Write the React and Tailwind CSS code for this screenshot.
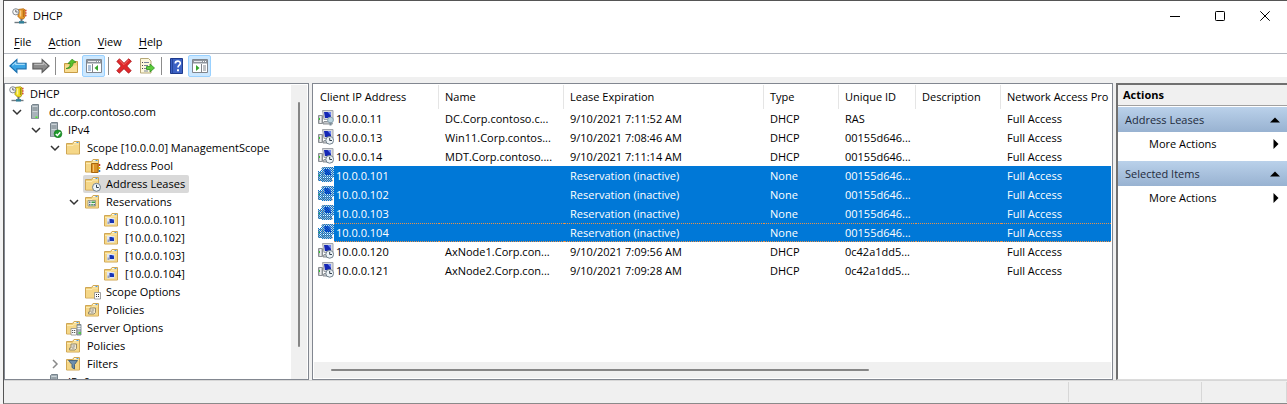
import React from "react";

/* ---------- icons ---------- */
const Svg = ({ children, size = "size-4" }) => (
  <svg viewBox="0 0 16 16" className={`${size} shrink-0`} aria-hidden="true">
    {children}
  </svg>
);

const DhcpMark = ({ fill, shade, shine }) => (
  <Svg>
    <path d="M6 1.500L11.500.8l1.500 1v6.700l-1.500 2.500H8.500L6 8.500z" fill={fill} stroke={shade} strokeWidth=".9" />
    <path d="M8.500 2.500v6" stroke={shine} strokeWidth="1.500" />
    <path d="M11.500 2v7" stroke={shade} strokeWidth="1.200" />
    <path d="M13.200 2.500h1.300M13.200 5h1.300M13.200 7.500h1.300" stroke="#d8361e" strokeWidth="1.500" />
    <path d="M9.500 11v2.500" stroke="#6b6f73" strokeWidth="2" />
    <path d="M2.500 14.500h12" stroke="#70797f" strokeWidth="1.400" />
    <path d="M7 14.300h5" stroke="#2f7f98" strokeWidth="2.400" />
    <circle cx="3.800" cy="3.800" r="3.100" fill="#f4f6f8" stroke="#858b91" />
    <path d="M3.800 1.800v2.200h1.900" fill="none" stroke="#555" strokeWidth=".9" />
  </Svg>
);

const Server = ({ ok }) => (
  <Svg>
    <path d="M3.500 1.500l1-1h6v14h-7z" fill="#9aa5ad" stroke="#77838c" />
    <path d="M4 1.500h6v13H4z" fill="#a9b4bb" />
    <path d="M4.500 3h5M4.500 5h5M4.500 7h5" stroke="#eef3f5" />
    <path d="M4.500 4h5M4.500 6h5" stroke="#4d5a64" strokeWidth=".8" />
    {ok ? (
      <>
        <circle cx="11" cy="11.800" r="3.900" fill="#1f9a2b" stroke="#11701b" strokeWidth=".6" />
        <path d="M8.800 11.900l1.600 1.600 2.900-3.200" fill="none" stroke="#fff" strokeWidth="1.400" />
      </>
    ) : (
      <path d="M7.500 12.500h2v1.500h-2z" fill="#4cf02a" />
    )}
  </Svg>
);

const FolderBase = () => (
  <>
    <path d="M.5 3.500h6l1.500-2h5.500v12.500H.5z" fill="#f0cf78" stroke="#cfa654" />
    <path d="M8 2.500h5" stroke="#fff8dc" />
    <path d="M10.500 2.500h2" stroke="#4f9be0" />
    <path d="M1 5.500l6.500-.5 1-1H13v9.500H1z" fill="#f5d788" />
    <path d="M1 5.500h6l1-1.500h5" fill="none" stroke="#fdefbf" strokeWidth=".8" />
  </>
);

const overlays = {
  pool: (
    <>
      <path d="M6.500 5.500H13v9H6.500z" fill="#dc9326" stroke="#a8660f" />
      <path d="M8.500 6.500v7.500" stroke="#f4c36d" />
      <path d="M14.500 6v2" stroke="#d33a22" strokeWidth="1.500" />
      <path d="M14.500 9v2" stroke="#e6b800" strokeWidth="1.500" />
      <path d="M14.500 12v2" stroke="#2b79c9" strokeWidth="1.500" />
    </>
  ),
  clock: (
    <>
      <circle cx="11.500" cy="11.300" r="4" fill="#eef4f8" stroke="#71808c" />
      <path d="M11.500 8.800v2.700h2.300" fill="none" stroke="#33414d" />
    </>
  ),
  grid: (
    <>
      <path d="M3 6.500h7.500V12H3z" fill="#eef2ea" stroke="#8d907c" strokeWidth=".8" />
      <path d="M4 7.500h1.500V9H4zM4 10h1.500v1.500H4zM8.500 10H10v1.500H8.500z" fill="#5b6f91" />
      <path d="M6.500 7.500H10V9H6.500zM6.300 10h1.500v1.500H6.300z" fill="#3a9b45" />
    </>
  ),
  pc: (
    <>
      <path d="M3 6h7.500v6.500H3z" fill="#dfe6f3" />
      <path d="M5.500 7H10v4H5.500z" fill="#1733b4" />
      <path d="M7.500 7H10v1.500z" fill="#6f8ff0" />
      <path d="M3.500 9.500h2V12h-2z" fill="#9aa2b6" />
    </>
  ),
  sheet: (
    <>
      <path d="M9.500 8.500h6v6.500h-6z" fill="#fdfdfd" stroke="#8b8b8b" strokeWidth=".8" />
      <path d="M11 10.500h1M13 10.500h1M11 12.500h1M13 12.500h1" stroke="#333" />
    </>
  ),
  scroll: (
    <>
      <path d="M5 6h5.500v4.500l-1.500 1.500H3.500v-2H5z" fill="#f2ead2" stroke="#8a8168" strokeWidth=".9" />
      <path d="M6.500 8h2.500M6 10h2.500" stroke="#7f7f7f" strokeWidth=".9" />
    </>
  ),
  serverSheet: (
    <>
      <path d="M11 4.500h4V15h-4z" fill="#a9b4bb" stroke="#6f7b84" strokeWidth=".8" />
      <path d="M11.500 6.500h3M11.500 8.500h3" stroke="#eef3f5" />
      <path d="M12.500 13H15" stroke="#3bd52a" strokeWidth="1.500" />
      <path d="M5 8.500h5.500V15H5z" fill="#fdfdfd" stroke="#8b8b8b" strokeWidth=".8" />
      <path d="M6.200 10.500h1M8.200 10.500h1M6.200 12.500h1M8.200 12.500h1" stroke="#333" />
    </>
  ),
  funnel: <path d="M2.500 4.500h9L8.500 8.500v4.500l-2.500-1.500v-3z" fill="#6e8fae" stroke="#3f5d7b" strokeWidth=".9" />,
};

const Folder = ({ kind }) => (
  <Svg>
    <FolderBase />
    {overlays[kind]}
  </Svg>
);

const Lease = ({ badge, selected }) => (
  <Svg>
    <defs>
      <pattern id="dither" width="2" height="2" patternUnits="userSpaceOnUse">
        <path d="M0 0h1v1H0zM1 1h1v1H1z" fill="#0078d7" shapeRendering="crispEdges" />
      </pattern>
    </defs>
    <path d="M.5 5.500h4v8h-4z" fill="#c3c6c9" stroke="#8a8e92" />
    <path d="M2.500 6v7" stroke="#eee" />
    <path d="M1 8h1v2H1z" fill="#30c92b" />
    <path d="M4.500.5h10.500v9H6z" fill="#d9dbe0" stroke="#a2a5ab" />
    <path d="M6 2h7v6H7z" fill="#1527b5" />
    <path d="M9.500 2H13v4z" fill="#6e86ee" />
    <path d="M6 11.500h7l1.500 2.500H5z" fill="#c4c7ca" stroke="#8e9297" />
    {badge === "bulb" ? (
      <>
        <circle cx="12.500" cy="10" r="2.900" fill="#b9d2de" stroke="#8ba3b0" />
        <path d="M12.500 12.500v3" stroke="#7b8d99" strokeWidth="2" />
      </>
    ) : (
      !selected && (
        <>
          <circle cx="11.700" cy="11.300" r="3.900" fill="#eef4f8" stroke="#71808c" />
          <path d="M11.700 8.800v2.700h2.300" fill="none" stroke="#33414d" />
        </>
      )
    )}
    {selected && <path d="M0 4h3V2l2-2h11v10l-2 1v4H4l-1-1H0z" fill="url(#dither)" />}
  </Svg>
);

const Arrow = ({ right, fill, edge, shine }) => (
  <Svg size="size-[18px]">
    <g transform={right ? "translate(16 0) scale(-1 1)" : undefined}>
      <path d="M.8 8L7 2.300v3.200h8.200v5H7v3.200z" fill={fill} stroke={edge} />
      <path d="M3 7.500l3-2.700v1.700h8" fill="none" stroke={shine} />
    </g>
  </Svg>
);

const UpFolder = () => (
  <Svg>
    <path d="M1.500 5.500h6l1-2h6v11h-13z" fill="#f0cf78" stroke="#c79c45" />
    <path d="M2 7.500h12v6.500H2z" fill="#f9dd92" />
    <path d="M3 10.500c3-.5 4.300-2.500 4.300-5H5L9 1.200l4 3-3 .8c0 3.500-3 6-7 5.500z" fill="#58c02c" stroke="#2f8a1b" strokeWidth=".7" />
  </Svg>
);

const Pane = ({ right }) => (
  <Svg>
    <path d="M.5 1.500h15v13H.5z" fill="#fff" stroke="#80858c" />
    <path d="M1 2h14v3H1z" fill="#8f959d" />
    <path d="M2 3.500h8" stroke="#e8eaed" />
    <path d="M11 3.500h1M13 3.500h1" stroke="#fff" />
    <path d="M1 5.500h14" stroke="#c6cace" />
    {right ? (
      <>
        <path d="M9.500 6v8" stroke="#80858c" />
        <path d="M11 8h3M11 10h3M11 12h3" stroke="#80858c" />
        <path d="M4 7l3.500 3L4 13z" fill="#35a52a" />
      </>
    ) : (
      <>
        <path d="M6.500 6v8" stroke="#80858c" />
        <path d="M2 8h3M2 10h3M2 12h3" stroke="#5f87b5" />
        <path d="M12 7l-3.500 3 3.500 3z" fill="#35a52a" />
      </>
    )}
  </Svg>
);

const Delete = () => (
  <Svg>
    <path d="M3.500.8L8 5.300 12.700.8l2.700 2.400L10.800 8l4.400 4.700-2.700 2.500L8 10.700l-4.700 4.500L.8 12.700 5.200 8 .8 3.400z" fill="#e0282b" stroke="#a8161b" strokeWidth=".8" />
    <path d="M3.400 2L8 6.600 12.600 2" fill="none" stroke="#f57b72" strokeWidth=".9" />
  </Svg>
);

const Export = () => (
  <Svg>
    <path d="M1.500.5h8l2.500 2.500v12H1.500z" fill="#fdf8dc" stroke="#b5a878" />
    <path d="M5 4.500h5M5 7.500h4M5 10.500h3M5 13h4" stroke="#79849a" />
    <path d="M3 4.500h1M3 7.500h1M3 10.500h1" stroke="#444" />
    <path d="M7.500 8.500h3.500V6l4.500 4-4.500 4v-2.500H7.500z" fill="#5ccc3c" stroke="#2f921f" strokeWidth=".8" />
  </Svg>
);

const HelpIcon = () => (
  <Svg>
    <path d="M1.500.5h12v15h-12z" fill="#3c62c4" stroke="#1f3b8c" />
    <path d="M3.500 1v14" stroke="#27479f" />
    <path d="M6.300 5.500c0-3.200 5-3 5-.3 0 2-2.300 2-2.300 4.300" fill="none" stroke="#fff" strokeWidth="1.700" />
    <path d="M8 11.300h2v2H8z" fill="#fff" />
  </Svg>
);

const Chevron = ({ open }) => (
  <svg viewBox="0 0 10 10" className="size-[10px]" aria-hidden="true">
    {open ? (
      <path d="M1 3l4 4 4-4" fill="none" stroke="#333" strokeWidth="1.500" />
    ) : (
      <path d="M3 1l4 4-4 4" fill="none" stroke="#8a8a8a" strokeWidth="1.500" />
    )}
  </svg>
);

/* ---------- data ---------- */
const host = (n) => ({ label: `[10.0.0.${n}]`, icon: <Folder kind="pc" /> });

const tree = [
  {
    label: "dc.corp.contoso.com",
    icon: <Server />,
    open: true,
    children: [
      {
        label: "IPv4",
        icon: <Server ok />,
        open: true,
        children: [
          {
            label: "Scope [10.0.0.0] ManagementScope",
            icon: <Folder />,
            open: true,
            children: [
              { label: "Address Pool", icon: <Folder kind="pool" /> },
              { label: "Address Leases", icon: <Folder kind="clock" />, active: true },
              {
                label: "Reservations",
                icon: <Folder kind="grid" />,
                open: true,
                children: [host(101), host(102), host(103), host(104)],
              },
              { label: "Scope Options", icon: <Folder kind="sheet" /> },
              { label: "Policies", icon: <Folder kind="scroll" /> },
            ],
          },
          { label: "Server Options", icon: <Folder kind="serverSheet" /> },
          { label: "Policies", icon: <Folder kind="scroll" /> },
          { label: "Filters", icon: <Folder kind="funnel" />, open: false },
        ],
      },
      { label: "IPv6", icon: <Server ok /> },
    ],
  },
];

const columns = ["Client IP Address", "Name", "Lease Expiration", "Type", "Unique ID", "Description", "Network Access Pro"];

const leases = [
  ["10.0.0.11", "DC.Corp.contoso.c...", "9/10/2021 7:11:52 AM", "DHCP", "RAS"],
  ["10.0.0.13", "Win11.Corp.contos...", "9/10/2021 7:08:46 AM", "DHCP", "00155d646..."],
  ["10.0.0.14", "MDT.Corp.contoso....", "9/10/2021 7:11:14 AM", "DHCP", "00155d646..."],
  ["10.0.0.101", "", "Reservation (inactive)", "None", "00155d646..."],
  ["10.0.0.102", "", "Reservation (inactive)", "None", "00155d646..."],
  ["10.0.0.103", "", "Reservation (inactive)", "None", "00155d646..."],
  ["10.0.0.104", "", "Reservation (inactive)", "None", "00155d646..."],
  ["10.0.0.120", "AxNode1.Corp.con...", "9/10/2021 7:09:56 AM", "DHCP", "0c42a1dd5..."],
  ["10.0.0.121", "AxNode2.Corp.con...", "9/10/2021 7:09:28 AM", "DHCP", "0c42a1dd5..."],
];

/* ---------- parts ---------- */
function Branch({ items, nested }) {
  return (
    <ul className={nested ? "pl-[19px]" : ""}>
      {items.map((item) => (
        <li key={item.label}>
          <div className="flex h-[18px] items-center">
            <span className="flex w-5 shrink-0 pl-[6px]">
              {item.open !== undefined && (
                <button aria-label={`Toggle ${item.label}`}>
                  <Chevron open={item.open} />
                </button>
              )}
            </span>
            <button className={`flex h-[18px] items-center gap-[5px] rounded-xs pr-1 pl-0.5 ${item.active ? "bg-[#d9d9d9]" : ""}`}>
              {item.icon}
              {item.label}
            </button>
          </div>
          {item.children && <Branch items={item.children} nested />}
        </li>
      ))}
    </ul>
  );
}

const ToolButton = ({ label, on, children }) => (
  <button
    aria-label={label}
    className={`flex h-[22px] w-[23px] items-center justify-center rounded-xs border ${on ? "border-[#99d1ff] bg-[#cce8ff]" : "border-transparent"}`}
  >
    {children}
  </button>
);

const Divider = () => <span className="mx-[3px] h-[18px] w-px bg-[#8c8c8c]" />;

const ActionGroup = ({ title }) => (
  <section className="mb-[5px]">
    <button className="flex h-[25px] w-full items-center justify-between bg-linear-to-b from-[#bad1ea] to-[#98b2d1] pr-[7px] pl-[7px] text-[#1e2b3c]">
      {title}
      <svg viewBox="0 0 10 6" className="h-[6px] w-[10px]" aria-hidden="true">
        <path d="M0 5.500L5 .5l5 5z" fill="#000" />
      </svg>
    </button>
    <button className="flex h-6 w-full items-center justify-between pr-2 pl-[31px]">
      More Actions
      <svg viewBox="0 0 6 10" className="h-[10px] w-[6px]" aria-hidden="true">
        <path d="M.5 0l5 5-5 5z" fill="#000" />
      </svg>
    </button>
  </section>
);

export default function App() {
  return (
    <div className="flex h-screen overflow-hidden bg-[#f3f3f3] pl-[3px] font-['Open_Sans','Noto_Sans',sans-serif] text-[11px] leading-4 whitespace-nowrap text-black">
      <div className="flex min-w-0 flex-1 flex-col border-t border-b border-l border-t-[#555] border-b-[#8a8a8a] border-l-[#555] bg-[#f0f0f0]">
        <header className="bg-white">
          <div className="flex h-[30px] items-center justify-between pr-[17px] pl-2">
            <h1 className="flex items-center gap-[5px]">
              <DhcpMark fill="#e79a2c" shade="#b9711a" shine="#f8cf86" />
              DHCP
            </h1>
            <div className="flex gap-[35px]">
              <button aria-label="Minimize">
                <svg viewBox="0 0 10 10" className="size-[10px]"><path d="M0 5.500h10" stroke="#000" /></svg>
              </button>
              <button aria-label="Maximize">
                <svg viewBox="0 0 10 10" className="size-[10px]"><rect x=".5" y=".5" width="9" height="9" rx=".8" fill="none" stroke="#000" /></svg>
              </button>
              <button aria-label="Close">
                <svg viewBox="0 0 10 10" className="size-[10px]"><path d="M.3.300l9.400 9.400M9.700.300L.3 9.700" stroke="#000" /></svg>
              </button>
            </div>
          </div>
          <nav className="flex h-[23px] items-center gap-[17px] border-b border-[#b4b8c0] pl-[10px]">
            {["File", "Action", "View", "Help"].map((m) => (
              <button key={m}>
                <span className="underline underline-offset-2">{m[0]}</span>
                {m.slice(1)}
              </button>
            ))}
          </nav>
          <div className="flex h-[23px] items-center pl-0.5">
            <ToolButton label="Back"><Arrow fill="#3ba5e4" edge="#1a6fae" shine="#a4dbf8" /></ToolButton>
            <ToolButton label="Forward"><Arrow right fill="#8b8b8b" edge="#5c5c5c" shine="#bcbcbc" /></ToolButton>
            <Divider />
            <ToolButton label="Up one level"><UpFolder /></ToolButton>
            <ToolButton label="Show console tree" on><Pane /></ToolButton>
            <Divider />
            <ToolButton label="Delete"><Delete /></ToolButton>
            <ToolButton label="Export list"><Export /></ToolButton>
            <Divider />
            <ToolButton label="Help"><HelpIcon /></ToolButton>
            <ToolButton label="Show action pane" on><Pane right /></ToolButton>
          </div>
        </header>

        <main className="flex min-h-0 flex-1 gap-[3px] pt-[6px]">
          <aside className="flex w-[305px] shrink-0 border border-[#828790] bg-white px-px pt-px">
            <div className="min-w-0 flex-1 overflow-hidden">
              <button className="flex h-[18px] items-center gap-[5px] pl-[3px]">
                <DhcpMark fill="#f0dc1e" shade="#a39412" shine="#fbf49a" />
                DHCP
              </button>
              <Branch items={tree} />
            </div>
            <div className="flex w-4 justify-center bg-[#f0f0f0] pt-[17px] pb-8">
              <div className="w-0.5 rounded-full bg-[#868686]" />
            </div>
          </aside>

          <section className="flex min-w-0 flex-1 flex-col border border-[#828790] bg-white p-px">
            <div className="min-h-0 flex-1 overflow-hidden">
              <table className="w-full table-fixed border-collapse text-left">
                <colgroup>
                  <col className="w-[125px]" />
                  <col className="w-[125px]" />
                  <col className="w-[200px]" />
                  <col className="w-[75px]" />
                  <col className="w-[77px]" />
                  <col className="w-[85px]" />
                  <col />
                </colgroup>
                <thead>
                  <tr className="h-6">
                    {columns.map((c, i) => (
                      <th key={c} className="p-0 font-normal">
                        <div className={`flex h-6 items-center border-r pl-[6px] ${i === columns.length - 1 ? "border-transparent" : "border-[#e5e5e5]"}`}>{c}</div>
                      </th>
                    ))}
                  </tr>
                </thead>
                <tbody>
                  {leases.map(([ip, name, expires, type, id], i) => {
                    const selected = type === "None";
                    const focused = ip === "10.0.0.104";
                    const tone = selected
                      ? focused
                        ? "bg-[#0078d7] text-white border-y border-dotted border-[#e8924a]"
                        : "bg-[#0078d7] text-white"
                      : "";
                    return (
                      <tr key={ip} className="h-[19px]">
                        <td className="p-0 pl-1">
                          <div className="flex h-[19px] items-start">
                            <span className="pt-px">
                              <Lease badge={i === 0 ? "bulb" : "clock"} selected={selected} />
                            </span>
                            <span className={`flex h-[19px] flex-1 items-center pl-0.5 ${tone}`}>{ip}</span>
                          </div>
                        </td>
                        {[name, expires, type, id, "", "Full Access"].map((v, k) => (
                          <td key={k} className="p-0">
                            <div className={`flex h-[19px] items-center pl-[6px] ${tone}`}>{v}</div>
                          </td>
                        ))}
                      </tr>
                    );
                  })}
                </tbody>
              </table>
            </div>
            <div className="flex h-4 items-center bg-[#f0f0f0] pl-[17px]">
              <div className="h-0.5 w-[69%] rounded-full bg-[#868686]" />
            </div>
          </section>

          <aside className="w-[171px] shrink-0 border-t-2 border-b border-l-2 border-t-[#707070] border-b-[#dcdcdc] border-l-[#707070] bg-white">
            <h2 className="mb-px flex h-[21px] items-center border-b border-[#a0a0a0] bg-[#f0f0f0] pl-[5px] font-bold">Actions</h2>
            <ActionGroup title="Address Leases" />
            <ActionGroup title="Selected Items" />
          </aside>
        </main>

        <footer className="flex h-[23px] justify-end border-t border-[#d7d7d7] py-px">
          <div className="w-[133px] border-l border-[#d7d7d7]" />
          <div className="w-[86px] border-x border-[#d7d7d7]" />
        </footer>
      </div>
    </div>
  );
}
